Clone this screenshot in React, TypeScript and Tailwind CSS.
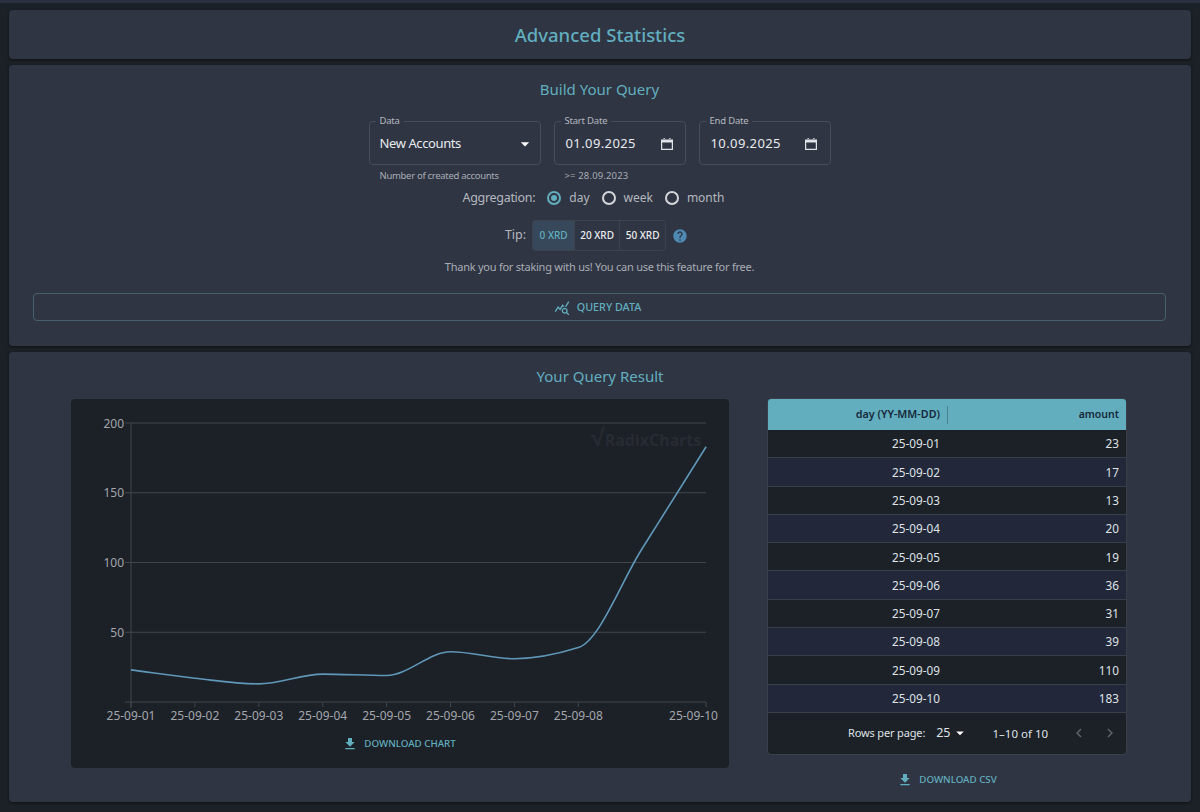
const FONT = "font-['Noto_Sans',sans-serif]";

const days = ["25-09-01", "25-09-02", "25-09-03", "25-09-04", "25-09-05", "25-09-06", "25-09-07", "25-09-08", "25-09-09", "25-09-10"];
const amounts = [23, 17, 13, 20, 19, 36, 31, 39, 110, 183];

// monotone-x curve through the points, same shape the chart lib draws
function monotonePath(pts: [number, number][]) {
  const n = pts.length;
  const d: number[] = [];
  const m: number[] = [];
  for (let i = 0; i < n - 1; i++) {
    d.push((pts[i + 1][1] - pts[i][1]) / (pts[i + 1][0] - pts[i][0]));
  }
  m[0] = d[0];
  m[n - 1] = d[n - 2];
  for (let i = 1; i < n - 1; i++) {
    m[i] = d[i - 1] * d[i] <= 0 ? 0 : (2 * d[i - 1] * d[i]) / (d[i - 1] + d[i]);
  }
  let out = `M${pts[0][0]},${pts[0][1]}`;
  for (let i = 0; i < n - 1; i++) {
    const h = (pts[i + 1][0] - pts[i][0]) / 3;
    out += `C${pts[i][0] + h},${pts[i][1] + m[i] * h} ${pts[i + 1][0] - h},${pts[i + 1][1] - m[i + 1] * h} ${pts[i + 1][0]},${pts[i + 1][1]}`;
  }
  return out;
}

function Chart() {
  const xOf = (i: number) => 60 + i * 63.9;
  const yOf = (v: number) => 303 - v * 1.395;
  const line = monotonePath(amounts.map((a, i) => [xOf(i), yOf(a)]));
  return (
    <svg width="658" height="330" className="block">
      <g stroke="#41454c" strokeWidth="1" fill="none">
        {[200, 150, 100, 50].map((v) => (
          <line key={v} x1="54" x2="635" y1={yOf(v)} y2={yOf(v)} />
        ))}
        <line x1="60" x2="60" y1="24" y2="309" />
        <line x1="54" x2="635" y1="303" y2="303" />
        {[0, 1, 2, 3, 4, 5, 6, 7, 9].map((i) => (
          <line key={i} x1={xOf(i)} x2={xOf(i)} y1="303" y2="308" />
        ))}
      </g>
      <g fill="#a3a7ad" fontSize="12" fontFamily="'Noto Sans', sans-serif">
        {[200, 150, 100, 50].map((v) => (
          <text key={v} x="53" y={yOf(v) + 4.5} textAnchor="end">
            {v}
          </text>
        ))}
        {[0, 1, 2, 3, 4, 5, 6, 7, 9].map((i) => (
          <text key={i} x={i === 9 ? 622.5 : xOf(i)} y="321" textAnchor="middle">
            {days[i]}
          </text>
        ))}
      </g>
      <text x="520" y="47" fill="#272b32" fontSize="16" fontWeight="700" fontFamily="'Noto Sans', sans-serif">
        <tspan fontSize="25">√</tspan>RadixCharts
      </text>
      <path d={line} fill="none" stroke="#5f97b8" strokeWidth="1.6" />
    </svg>
  );
}

function CalendarIcon() {
  return (
    <svg width="14" height="14" viewBox="0 0 14 14" className="text-[#dfe2e6]">
      <path
        fill="currentColor"
        d="M1 2.5h12v10.5H1zM2.2 5.6v6.2h9.6V5.6zM3.5 1h1.3v2H3.5zM9.2 1h1.3v2H9.2z"
        fillRule="evenodd"
      />
    </svg>
  );
}

function DropIcon({ size = 24 }: { size?: number }) {
  return (
    <svg width={size} height={size} viewBox="0 0 24 24" fill="#ffffff">
      <path d="M7 10l5 5 5-5z" />
    </svg>
  );
}

function DownloadIcon() {
  return (
    <svg width="16" height="16" viewBox="0 0 24 24" fill="#62aebf">
      <path d="M5 20h14v-2H5zM19 9h-4V3H9v6H5l7 7z" />
    </svg>
  );
}

function Field({ label, width, value, valueClass, hint, hintClass, icon, pr }: { label: string; width: string; value: string; valueClass: string; hint: string; hintClass: string; icon: React.ReactNode; pr: string }) {
  return (
    <div className={width}>
      <div className={`relative flex h-[44px] items-center justify-between rounded border border-[#464c58] pl-[10px] pt-[1px] ${pr}`}>
        <span className="absolute -top-[7px] left-[6px] bg-[#2f3543] px-[4px] text-[9.5px] leading-[12px] tracking-[-0.2px] text-[#b4b8bf]">{label}</span>
        <span className={`text-[13px] text-[#e8eaed] ${valueClass}`}>{value}</span>
        {icon}
      </div>
      <div className={`mt-[4px] h-[14px] pl-[11px] text-[9.5px] leading-[14px] text-[#a8acb4] ${hintClass}`}>{hint}</div>
    </div>
  );
}

function Radio({ label, on }: { label: string; on?: boolean }) {
  return (
    <div className="flex items-center gap-[8px]">
      <span className={`flex h-[14px] w-[14px] items-center justify-center rounded-full border-2 ${on ? "border-[#62aebf]" : "border-[#d4d6da]"}`}>
        {on && <span className="h-[6px] w-[6px] rounded-full bg-[#62aebf]" />}
      </span>
      <span className="text-[12px] text-[#b4b8bf]">{label}</span>
    </div>
  );
}

function Panel({ className, children }: { className: string; children: React.ReactNode }) {
  return <div className={`rounded bg-[#2f3543] shadow-[0_1px_3px_rgba(0,0,0,0.5)] ${className}`}>{children}</div>;
}

export default function App() {
  return (
    <div className={`h-[812px] w-[1200px] overflow-hidden bg-[#1c2127] ${FONT}`}>
      <div className="h-[3px] bg-[#2b3040]" />
      <div className="flex flex-col gap-[6px] px-[9px] pt-[7px]">
        <Panel className="flex h-[49px] items-center justify-center">
          <h1 className="text-[18.5px] font-medium text-[#62aebf]">Advanced Statistics</h1>
        </Panel>

        <Panel className="flex h-[281px] flex-col items-center pl-[24px] pr-[25px] pt-[14px]">
          <h2 className="text-[15px] leading-[20px] text-[#62aebf]">Build Your Query</h2>
          <div className="mt-[22px] flex gap-[13px]">
            <Field label="Data" width="w-[172px]" value="New Accounts" valueClass="tracking-[-0.4px]" hint="Number of created accounts" hintClass="tracking-[-0.3px]" icon={<DropIcon size={20} />} pr="pr-[5px]" />
            <Field label="Start Date" width="w-[132px]" value="01.09.2025" valueClass="ml-[1px] tracking-[0.4px]" hint=">= 28.09.2023" hintClass="tracking-[0.15px]" icon={<CalendarIcon />} pr="pr-[11px]" />
            <Field label="End Date" width="w-[132px]" value="10.09.2025" valueClass="ml-[1px] tracking-[0.4px]" hint="" hintClass="" icon={<CalendarIcon />} pr="pr-[12px]" />
          </div>
          <div className="mt-[5px] flex h-[20px] items-center gap-[12px] pr-[12px]">
            <span className="text-[12.5px] tracking-[-0.3px] text-[#b4b8bf]">Aggregation:</span>
            <Radio label="day" on />
            <Radio label="week" />
            <Radio label="month" />
          </div>
          <div className="mt-[12px] flex h-[31px] items-center pr-[6px]">
            <span className="mr-[6px] text-[12.5px] text-[#b4b8bf]">Tip:</span>
            <div className="flex h-[31px] rounded border border-[#3c424e] text-[10px] font-medium">
              <span className="flex w-[41px] items-center justify-center bg-[#36485a] text-[#62aebf]">0 XRD</span>
              <span className="flex w-[45px] items-center justify-center border-l border-[#3c424e] text-[#eceef0]">20 XRD</span>
              <span className="flex w-[46px] items-center justify-center border-l border-[#3c424e] text-[#eceef0]">50 XRD</span>
            </div>
            <svg width="16" height="16" viewBox="0 0 24 24" fill="#4f8ab5" className="ml-[6px]">
              <path d="M12 2C6.48 2 2 6.48 2 12s4.48 10 10 10 10-4.48 10-10S17.52 2 12 2zm1 17h-2v-2h2v2zm2.07-7.75l-.9.92C13.45 12.9 13 13.5 13 15h-2v-.5c0-1.1.45-2.1 1.17-2.83l1.24-1.26c.37-.36.59-.86.59-1.41 0-1.1-.9-2-2-2s-2 .9-2 2H8c0-2.21 1.79-4 4-4s4 1.79 4 4c0 .88-.36 1.68-.93 2.25z" />
            </svg>
          </div>
          <p className="mt-[9px] text-[11px] leading-[14px] tracking-[-0.25px] text-[#a8acb4]">Thank you for staking with us! You can use this feature for free.</p>
          <button className="mt-[19px] flex h-[28px] w-full items-center justify-center gap-[7px] rounded border border-[#47606f] pr-[4px] pt-[1px] text-[10.75px] font-medium text-[#62aebf]">
            <svg width="16" height="16" viewBox="0 0 24 24" fill="#62aebf">
              <path d="M19.88 18.47c.44-.7.7-1.51.7-2.39 0-2.49-2.01-4.5-4.5-4.5s-4.5 2.01-4.5 4.5 2.01 4.5 4.49 4.5c.88 0 1.7-.26 2.39-.7L21.58 23 23 21.58zm-3.8.11c-1.38 0-2.5-1.12-2.5-2.5s1.12-2.5 2.5-2.5 2.5 1.12 2.5 2.5-1.12 2.5-2.5 2.5m-.36-8.5c-.74.02-1.45.18-2.1.45l-.55-.83-3.8 6.18-3.01-3.52-3.63 5.81L1 17l5-8 3 3.5L13 6zm2.59.5c-.64-.28-1.33-.45-2.05-.49L21.38 2 23 3.18z" />
            </svg>
            QUERY DATA
          </button>
        </Panel>

        <Panel className="flex h-[450px] flex-col pt-[14px]">
          <h2 className="text-center text-[15px] leading-[20px] text-[#62aebf]">Your Query Result</h2>
          <div className="mt-[12px] flex items-start gap-[38px] pl-[62px]">
            <div className="mt-[1px] h-[369px] w-[658px] rounded-sm bg-[#1c2027]">
              <Chart />
              <div className="mt-[7px] flex items-center justify-center gap-[6px] pr-[2px] text-[9.75px] font-medium text-[#62aebf]">
                <DownloadIcon />
                DOWNLOAD CHART
              </div>
            </div>
            <div className="w-[360px]">
              <div className="overflow-hidden rounded border border-[#3a3f4a] bg-[#1c2027]">
                <div className="flex h-[31px] items-center bg-[#62aebf] text-[10.75px] font-semibold text-[#17293a]">
                  <div className="w-[172px] text-right">day (YY-MM-DD)</div>
                  <div className="ml-[7px] h-[18px] w-px bg-[#4a7f90]" />
                  <div className="flex-1 pr-[7px] text-right text-[10.5px]">amount</div>
                </div>
                {days.map((d, i) => (
                  <div key={d} className={`flex h-[28.3px] items-center border-b border-[#3a3f4a] pt-[1px] text-[11.75px] text-[#dfe2e6] ${i % 2 ? "bg-[#222839]" : "bg-[#1c2027]"}`}>
                    <div className="w-[172px] text-right">{d}</div>
                    <div className="flex-1 pr-[7px] text-right">{amounts[i]}</div>
                  </div>
                ))}
                <div className="flex h-[41px] items-center text-[11.5px] text-[#dfe2e6]">
                  <span className="ml-[80px] text-[11px] tracking-[-0.15px]">Rows per page:</span>
                  <span className="ml-[11px] text-[12.5px]">25</span>
                  <DropIcon size={18} />
                  <span className="ml-[24px]">1–10 of 10</span>
                  <svg width="18" height="18" viewBox="0 0 24 24" fill="#5d6168" className="ml-[22px]">
                    <path d="M15.41 7.41 14 6l-6 6 6 6 1.41-1.41L10.83 12z" />
                  </svg>
                  <svg width="18" height="18" viewBox="0 0 24 24" fill="#5d6168" className="ml-[13px]">
                    <path d="M10 6 8.59 7.41 13.17 12l-4.58 4.59L10 18l6-6z" />
                  </svg>
                </div>
              </div>
              <div className="mt-[17px] flex items-center justify-center gap-[6px] text-[9.75px] font-medium text-[#62aebf]">
                <DownloadIcon />
                DOWNLOAD CSV
              </div>
            </div>
          </div>
        </Panel>
      </div>
    </div>
  );
}
